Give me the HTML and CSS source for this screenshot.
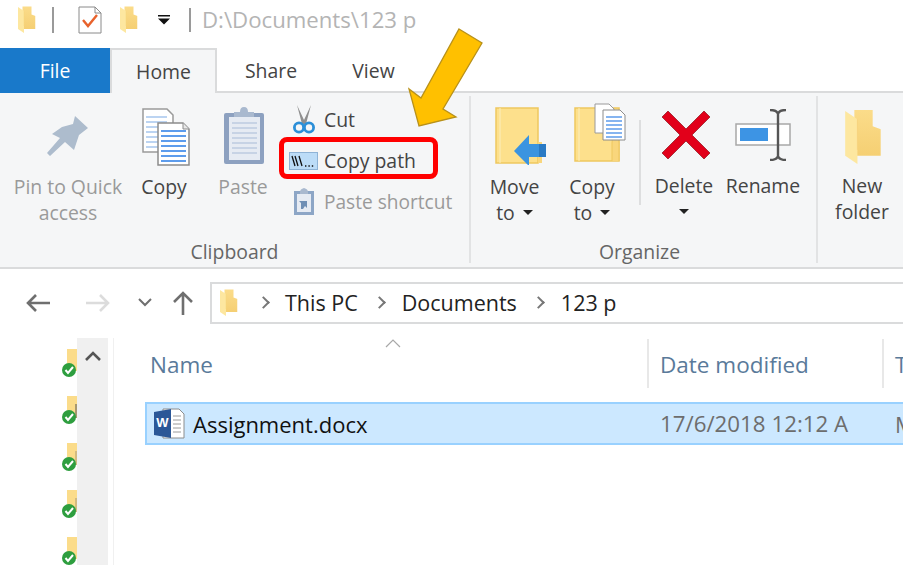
FILE: index.html
```html
<!DOCTYPE html>
<html lang="en">
<head>
    <meta charset="UTF-8">
    <title>123 p</title>
    <link rel="stylesheet" href="styles.css">
</head>
<body>
    <svg class="defs" width="0" height="0">
        <defs>
            <linearGradient id="folderBack" x1="0" y1="0" x2="0" y2="1">
                <stop offset="0" stop-color="#fbdc8a"/>
                <stop offset="1" stop-color="#f5cf73"/>
            </linearGradient>
            <symbol id="folder" viewBox="0 0 36 54">
                <path d="M2 1H28V17L36 20V46H10V1Z" fill="url(#folderBack)"/>
                <path d="M1 2L13 10V54L1 46Z" fill="#fde7a0"/>
                <path d="M13 10V40" stroke="#f7d47e" fill="none"/>
            </symbol>
        </defs>
    </svg>

    <div id="window">
        <div class="titlebar">
            <svg class="qa-folder" viewBox="0 0 36 54"><use href="#folder"/></svg>
            <span class="qa-sep"></span>
            <svg class="qa-check" viewBox="0 0 24 28">
                <path d="M1 1H17L23 7V27H1Z" fill="#fff" stroke="#8a8a8a"/>
                <path d="M17 1V7H23" fill="none" stroke="#8a8a8a"/>
                <path d="M5 14L10 20L19 9" fill="none" stroke="#e8622c" stroke-width="2.4"/>
            </svg>
            <svg class="qa-folder qa-folder2" viewBox="0 0 36 54"><use href="#folder"/></svg>
            <svg class="qa-drop" viewBox="0 0 12 10">
                <path d="M0 0H12V1.6H0Z M0 3.5H12L6 9.5Z" fill="#111"/>
            </svg>
            <span class="qa-sep qa-sep2"></span>
            <span class="title-path">D:\Documents\123 p</span>
        </div>

        <div class="tabs">
            <div class="tab tab-file">File</div>
            <div class="tab tab-home">Home</div>
            <div class="tab tab-share">Share</div>
            <div class="tab tab-view">View</div>
        </div>

        <div class="ribbon">
            <div class="group group-clipboard">
                <div class="group-body">
                    <div class="big big-pin off">
                        <svg class="big-icon" width="42" height="42" viewBox="0 0 42 42">
                            <path d="M28 1L41 13L32 20L27 35L18 27L3 41L0 38L13 23L5 19L15 12L26 9Z" fill="#adbccd"/>
                        </svg>
                        <span>Pin to Quick<br>access</span>
                    </div>
                    <div class="big big-copy">
                        <svg class="big-icon" width="48" height="58" viewBox="0 0 48 58">
                            <path d="M1 1H25L31 7V44H1Z" fill="#fff" stroke="#9a9a9a" stroke-width="1.5"/>
                            <path d="M4 9H25M4 14H25M4 19H25M4 24H25M4 29H25M4 34H25M4 39H25" stroke="#bcd4f2" stroke-width="2"/>
                            <path d="M16 15H41L47 21V57H16Z" fill="#fff" stroke="#8c8c8c" stroke-width="1.5"/>
                            <path d="M41 15V21H47" fill="#e8e8e8" stroke="#8c8c8c"/>
                            <path d="M19 23H44M19 28H44M19 33H44M19 38H44M19 43H44M19 48H44M19 53H44" stroke="#5d9cec" stroke-width="2"/>
                        </svg>
                        <span>Copy</span>
                    </div>
                    <div class="big big-paste off">
                        <svg class="big-icon" width="42" height="58" viewBox="0 0 42 58">
                            <path d="M3 6H39Q41 6 41 8V55Q41 57 39 57H3Q1 57 1 55V8Q1 6 3 6Z" fill="#8da1c0"/>
                            <path d="M6 10H37V53H6Z" fill="#e6ebf3"/>
                            <path d="M9 16H34M9 21H34M9 26H34M9 31H34M9 36H34M9 41H34M9 46H34" stroke="#c7d3e5" stroke-width="2"/>
                            <path d="M11 5H17Q17 0 21 0Q25 0 25 5H31V10H11Z" fill="#a9b9cf"/>
                        </svg>
                        <span>Paste</span>
                    </div>
                    <div class="small-col">
                        <div class="small small-cut">
                            <svg width="22" height="29" viewBox="0 0 22 29">
                                <path d="M4 0L11 15L18 0L13 19L9 19Z" fill="#8f8f8f"/>
                                <circle cx="6" cy="22.5" r="4.6" fill="none" stroke="#2b8fd8" stroke-width="2.8"/>
                                <circle cx="16" cy="22.5" r="4.6" fill="none" stroke="#2b8fd8" stroke-width="2.8"/>
                            </svg>
                            <span>Cut</span>
                        </div>
                        <div class="small small-path">
                            <svg width="29" height="18" viewBox="0 0 29 18">
                                <rect x="0.5" y="0.5" width="28" height="17" fill="#bcdcf7" stroke="#8fb3d6"/>
                                <path d="M3 4L6 14M6 4L9 14M10 4L13 14" stroke="#111" stroke-width="1.3"/>
                                <path d="M16 14H17.4M19.4 14H20.8M22.8 14H24.2" stroke="#111" stroke-width="1.3"/>
                            </svg>
                            <span>Copy path</span>
                        </div>
                        <div class="small small-shortcut off">
                            <svg width="22" height="29" viewBox="0 0 22 29">
                                <path d="M1 4H21V28H1Z" fill="#8da6c6"/>
                                <path d="M4 7H18V25H4Z" fill="#e6ebf3"/>
                                <path d="M7 5Q7 2 11 1Q15 2 15 5V7H7Z" fill="#a9b9cf"/>
                                <path d="M8 22V16L6 14H14V21L12 19L10 22Z" fill="#6f8fb5"/>
                            </svg>
                            <span>Paste shortcut</span>
                        </div>
                    </div>
                </div>
                <div class="group-label">Clipboard</div>
            </div>

            <div class="group group-organize">
                <div class="group-body">
                    <div class="big big-move">
                        <svg class="big-icon" width="52" height="58" viewBox="0 0 52 58">
                            <path d="M1 1H43V56H1Z" fill="#fde08c" stroke="#eec75f" stroke-width="1.5"/>
                            <path d="M5 1V56" stroke="#fbeebd"/>
                            <path d="M43 35V56H47V35Z" fill="#f9d67c"/>
                            <path d="M19 44L34 28V37H51V50H34V59Z" fill="#3b94e0"/>
                            <path d="M44 37H51V50H44Z" fill="#2a7ac4"/>
                        </svg>
                        <span>Move<br>to <i class="caret"></i></span>
                    </div>
                    <div class="big big-copyto">
                        <svg class="big-icon" width="52" height="60" viewBox="0 0 52 60">
                            <path d="M1 5H45V58H1Z" fill="#fde08c" stroke="#eec75f" stroke-width="1.5"/>
                            <path d="M5 5V58" stroke="#fbeebd"/>
                            <path d="M38 58V40Q38 34 42 34Q45 34 45 40V58" fill="#f9d67c" stroke="#eec75f"/>
                            <path d="M21 1H35L40 6V30H21Z" fill="#fff" stroke="#9a9a9a"/>
                            <path d="M29 7H46L51 12V37H29Z" fill="#fff" stroke="#8c8c8c"/>
                            <path d="M32 14H48M32 18H48M32 22H48M32 26H48M32 30H48M32 34H48" stroke="#5d9cec" stroke-width="1.5"/>
                        </svg>
                        <span>Copy<br>to <i class="caret"></i></span>
                    </div>
                    <div class="vsep"></div>
                    <div class="big big-delete">
                        <svg class="big-icon" width="50" height="50" viewBox="0 0 50 50">
                            <path d="M7 1L25 19L43 1L49 7L31 25L49 43L43 49L25 31L7 49L1 43L19 25L1 7Z" fill="#e2001a" stroke="#a8323c"/>
                        </svg>
                        <span>Delete<br><i class="caret"></i></span>
                    </div>
                    <div class="big big-rename">
                        <svg class="big-icon" width="56" height="52" viewBox="0 0 56 52">
                            <rect x="1" y="15" width="54" height="21" fill="#fff" stroke="#a8a8a8" stroke-width="1.5"/>
                            <rect x="5" y="19" width="28" height="13" fill="#3d94e4"/>
                            <path d="M35 1Q42 1 43 5Q44 1 51 1M43 5V47M35 51Q42 51 43 47Q44 51 51 51" fill="none" stroke="#555" stroke-width="2.4"/>
                        </svg>
                        <span>Rename</span>
                    </div>
                </div>
                <div class="group-label">Organize</div>
            </div>

            <div class="group group-new">
                <div class="group-body">
                    <div class="big big-new">
                        <svg class="big-icon" width="37" height="55" viewBox="0 0 36 54"><use href="#folder"/></svg>
                        <span>New<br>folder</span>
                    </div>
                </div>
            </div>
        </div>

        <div class="addressrow">
            <div class="navbtns">
                <svg class="nav-back" width="26" height="20" viewBox="0 0 26 20">
                    <path d="M25 10H3M11 2L3 10L11 18" fill="none" stroke="#6f6f6f" stroke-width="2.6"/>
                </svg>
                <svg class="nav-forward" width="26" height="20" viewBox="0 0 26 20">
                    <path d="M1 10H23M15 2L23 10L15 18" fill="none" stroke="#dcdcdc" stroke-width="2.6"/>
                </svg>
                <svg class="nav-down" width="14" height="9" viewBox="0 0 14 9">
                    <path d="M1 1L7 7L13 1" fill="none" stroke="#6f6f6f" stroke-width="2"/>
                </svg>
                <svg class="nav-up" width="22" height="26" viewBox="0 0 22 26">
                    <path d="M11 25V3M2 12L11 3L20 12" fill="none" stroke="#6f6f6f" stroke-width="2.6"/>
                </svg>
            </div>
            <div class="addressbox">
                <svg class="addr-folder" viewBox="0 0 36 54"><use href="#folder"/></svg>
                <span class="chev"></span>
                <span class="crumb">This PC</span>
                <span class="chev"></span>
                <span class="crumb">Documents</span>
                <span class="chev"></span>
                <span class="crumb">123 p</span>
            </div>
        </div>

        <div class="main">
            <div class="tree">
                <div class="tree-icons">
                    <svg class="tree-item" viewBox="0 0 16 30"><path d="M6 0H16V22H6Z" fill="#fbdc8a"/><circle cx="8" cy="21" r="7" fill="#2e9e3f"/><path d="M4.5 21L7 24L12 18" fill="none" stroke="#fff" stroke-width="2"/></svg>
                    <svg class="tree-item" viewBox="0 0 16 30"><path d="M6 0H16V22H6Z" fill="#fbdc8a"/><path d="M15 8V22" stroke="#555"/><circle cx="8" cy="21" r="7" fill="#2e9e3f"/><path d="M4.5 21L7 24L12 18" fill="none" stroke="#fff" stroke-width="2"/></svg>
                    <svg class="tree-item" viewBox="0 0 16 30"><path d="M6 0H16V22H6Z" fill="#fbdc8a"/><path d="M15 8V22" stroke="#a89a78"/><circle cx="8" cy="21" r="7" fill="#2e9e3f"/><path d="M4.5 21L7 24L12 18" fill="none" stroke="#fff" stroke-width="2"/></svg>
                    <svg class="tree-item" viewBox="0 0 16 30"><path d="M6 0H16V22H6Z" fill="#fbdc8a"/><path d="M15 8V22" stroke="#a89a78"/><circle cx="8" cy="21" r="7" fill="#2e9e3f"/><path d="M4.5 21L7 24L12 18" fill="none" stroke="#fff" stroke-width="2"/></svg>
                    <svg class="tree-item" viewBox="0 0 16 30"><path d="M6 0H16V22H6Z" fill="#fbdc8a"/><circle cx="8" cy="21" r="7" fill="#2e9e3f"/><path d="M4.5 21L7 24L12 18" fill="none" stroke="#fff" stroke-width="2"/></svg>
                </div>
                <div class="tree-scroll">
                    <svg width="16" height="10" viewBox="0 0 16 10"><path d="M1 9L8 2L15 9" fill="none" stroke="#555" stroke-width="2.6"/></svg>
                </div>
            </div>
            <div class="files">
                <div class="headers">
                    <div class="col col-name">Name</div>
                    <div class="col col-date">Date modified</div>
                    <div class="col col-type">T</div>
                </div>
                <div class="filerow">
                    <svg class="word" width="32" height="31" viewBox="0 0 32 31">
                        <path d="M10 1H26L31 6V30H10Z" fill="#fff" stroke="#8c8c8c"/>
                        <path d="M20 8H28M20 12H28M20 16H28M20 20H28M20 24H28" stroke="#9a9a9a"/>
                        <path d="M1 4L18 1V30L1 27Z" fill="#2b5797"/>
                        <text class="word-w" x="9.5" y="19">W</text>
                    </svg>
                    <div class="cell-name">Assignment.docx</div>
                    <div class="cell-date">17/6/2018 12:12 A</div>
                    <div class="cell-type">M</div>
                </div>
            </div>
        </div>

        <svg class="sortcaret" width="16" height="9" viewBox="0 0 16 9"><path d="M1 8L8 1L15 8" fill="none" stroke="#a8a8a8" stroke-width="1.2"/></svg>
        <div class="highlight"></div>
        <svg class="callout" width="90" height="110" viewBox="0 0 90 110">
            <path d="M64 2L87 16L48 82L61 90L24 99L14 62L26 71Z" fill="#ffc000" stroke="#b8911a" stroke-width="1.3"/>
        </svg>
    </div>
</body>
</html>
```

FILE: styles.css
```css
*{
    margin: 0;
    padding: 0;
    box-sizing: border-box;
}
html,body{
    background: #fff;
}
.defs{
    position: absolute;
}
#window{
    width: 903px;
    height: 565px;
    position: relative;
    overflow: hidden;
    font-family: "Open Sans", "Noto Sans", sans-serif;
    font-size: 19.4px;
    color: #444;
}

/* title bar */
.titlebar{
    height: 48px;
    display: flex;
    align-items: center;
    padding: 0 0 9px 17px;
}
.qa-folder{
    width: 19px;
    height: 27px;
}
.qa-sep{
    width: 2px;
    height: 26px;
    background: #9a9a9a;
    margin-left: 16px;
}
.qa-check{
    width: 24px;
    height: 28px;
    margin-left: 24px;
}
.qa-folder2{
    margin-left: 17px;
}
.qa-drop{
    width: 12px;
    height: 10px;
    margin-left: 20px;
}
.qa-sep2{
    margin-left: 19px;
    height: 24px;
}
.title-path{
    margin-left: 11px;
    font-size: 22.2px;
    color: #b4b4b4;
}

/* tabs */
.tabs{
    height: 45px;
    display: flex;
    border-bottom: 2px solid #dadbdc;
}
.tab{
    height: 45px;
    line-height: 45px;
    text-align: center;
}
.tab-file{
    width: 110px;
    background: #1979ca;
    color: #fff;
}
.tab-home{
    width: 107px;
    background: #f5f6f7;
    border: 2px solid #dadbdc;
    border-bottom: 0;
    line-height: 43px;
}
.tab-share{
    width: 108px;
}
.tab-view{
    width: 97px;
}

/* ribbon */
.ribbon{
    height: 176px;
    display: flex;
    background: #f5f6f7;
    border-bottom: 2px solid #dadbdc;
}
.group{
    flex: none;
    display: flex;
    flex-direction: column;
    border-right: 2px solid #e2e3e4;
    margin-top: 3px;
    margin-bottom: 4px;
}
.group-clipboard{
    width: 471px;
}
.group-organize{
    width: 347px;
}
.group-new{
    border-right: 0;
}
.group-body{
    flex: 1;
    display: flex;
}
.group-label{
    height: 22px;
    line-height: 22px;
    text-align: center;
    color: #666;
}
.group-organize .group-label{
    padding-right: 8px;
}
.big{
    display: flex;
    flex-direction: column;
    align-items: center;
    text-align: center;
    line-height: 26px;
    white-space: nowrap;
    color: #444;
}
.big-icon{
    flex: none;
}
.big span{
    display: block;
}
.off,.off span{
    color: #9a9a9a;
}
.big-pin{
    width: 116px;
    margin-left: 10px;
    padding-top: 19px;
}
.big-pin .big-icon{
    margin-bottom: 17px;
}
.big-copy{
    width: 76px;
    padding-top: 12px;
}
.big-copy .big-icon{
    margin-bottom: 8px;
    margin-left: 4px;
}
.big-paste{
    width: 82px;
    padding-top: 11px;
}
.big-paste .big-icon{
    margin-bottom: 9px;
    margin-left: 1px;
}
.small-col{
    display: flex;
    flex-direction: column;
    padding: 3px 0 0 5px;
}
.small{
    height: 41px;
    display: flex;
    align-items: center;
    white-space: nowrap;
}
.small svg{
    flex: none;
}
.small span{
    margin-left: 9px;
}
.small-cut svg,.small-shortcut svg{
    margin-left: 4px;
}
.small-path span{
    margin-left: 6px;
}
.small-shortcut span{
    font-size: 19.1px;
}
.big-move{
    width: 79px;
    margin-left: 4px;
    padding-top: 11px;
}
.big-move .big-icon{
    margin-bottom: 9px;
    margin-left: 12px;
}
.big-copyto{
    width: 76px;
    padding-top: 7px;
}
.big-copyto .big-icon{
    margin-bottom: 11px;
    margin-left: 16px;
}
.vsep{
    width: 2px;
    height: 85px;
    margin: 24px 0 0 9px;
    background: #dddedf;
}
.big-delete{
    width: 86px;
    padding-top: 14px;
}
.big-delete .big-icon{
    margin-bottom: 13px;
    margin-left: 4px;
}
.big-rename{
    width: 72px;
    padding-top: 13px;
}
.big-rename .big-icon{
    margin-bottom: 12px;
}
.big-new{
    width: 88px;
    padding-top: 13px;
}
.big-new .big-icon{
    margin-bottom: 9px;
}
.caret{
    display: inline-block;
    width: 0;
    height: 0;
    border-left: 5px solid transparent;
    border-right: 5px solid transparent;
    border-top: 5px solid #222;
    vertical-align: 5px;
    margin-left: 3px;
}
.big-delete .caret{
    margin-left: 0;
}

/* address bar */
.addressrow{
    display: flex;
    align-items: center;
    height: 67px;
}
.navbtns{
    width: 210px;
    display: flex;
    align-items: center;
    padding-left: 25px;
}
.nav-forward{
    margin-left: 34px;
}
.nav-down{
    margin-left: 27px;
}
.nav-up{
    margin-left: 20px;
}
.addressbox{
    flex: 1;
    height: 42px;
    display: flex;
    align-items: center;
    border: 2px solid #dadbdc;
    border-right: 0;
    padding-left: 7px;
    color: #222;
    font-size: 21.5px;
}
.addr-folder{
    width: 19px;
    height: 27px;
}
.chev{
    width: 9px;
    height: 9px;
    border-top: 2px solid #777;
    border-right: 2px solid #777;
    transform: rotate(45deg);
    margin: 0 17px 0 21px;
}
.crumb + .chev{
    margin: 0 18px 0 17px;
}

/* content */
.main{
    display: flex;
    height: 229px;
}
.tree{
    width: 114px;
    display: flex;
    margin-top: 2px;
    border-right: 1px solid #f0f0f0;
    padding-right: 5px;
}
.tree-icons{
    width: 78px;
    display: flex;
    flex-direction: column;
    align-items: flex-end;
    gap: 17px;
    padding-top: 11px;
}
.tree-item{
    width: 16px;
    height: 30px;
    flex: none;
}
.tree-scroll{
    width: 31px;
    background: #f0f0f0;
    display: flex;
    justify-content: center;
    align-items: flex-start;
    padding-top: 13px;
}
.files{
    flex: 1;
}
.headers{
    height: 49px;
    display: flex;
    padding-left: 36px;
    margin-top: 3px;
    color: #5a7a9a;
    font-size: 22.5px;
}
.col{
    height: 49px;
    line-height: 51px;
    white-space: nowrap;
}
.col-name{
    width: 497px;
}
.col-date{
    width: 235px;
    padding-left: 11px;
    border-left: 2px solid #e8e8e8;
}
.col-type{
    padding-left: 11px;
    border-left: 2px solid #e8e8e8;
}
.filerow{
    margin: 14px 0 0 31px;
    height: 43px;
    display: flex;
    align-items: center;
    background: #cce8ff;
    border: 2px solid #99d1ff;
    border-right: 0;
    padding-left: 6px;
    color: #111;
    font-size: 22px;
    white-space: nowrap;
}
.word{
    flex: none;
}
.word-w{
    font-family: "Liberation Sans", sans-serif;
    font-size: 13px;
    font-weight: bold;
    fill: #fff;
    text-anchor: middle;
}
.cell-name{
    width: 467px;
    margin-left: 8px;
}
.cell-date{
    width: 235px;
    font-size: 22.3px;
    color: #6d6d6d;
}
.cell-type{
    color: #6d6d6d;
}

/* overlays on top of the screenshot */
.sortcaret{
    position: absolute;
    left: 385px;
    top: 339px;
}
.highlight{
    position: absolute;
    left: 279px;
    top: 137px;
    width: 159px;
    height: 42px;
    border: 5px solid #f00;
    border-radius: 8px;
}
.callout{
    position: absolute;
    left: 395px;
    top: 27px;
}
```
